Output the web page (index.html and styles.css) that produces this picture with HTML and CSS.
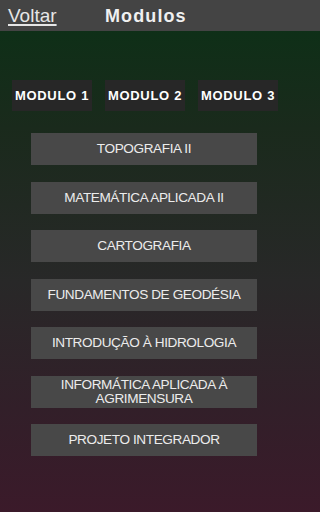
FILE: index.html
```html
<!DOCTYPE html>
<html lang="pt">
<head>
<meta charset="utf-8">
<title>Modulos</title>
<link rel="stylesheet" href="styles.css">
</head>
<body>
<div class="app">
  <header class="topbar">
    <a class="back" href="#">Voltar</a>
    <h1 class="title">Modulos</h1>
    <span></span>
  </header>
  <nav class="modules">
    <button class="mod">MODULO 1</button>
    <button class="mod">MODULO 2</button>
    <button class="mod">MODULO 3</button>
  </nav>
  <ul class="list">
    <li class="item">TOPOGRAFIA II</li>
    <li class="item">MATEMÁTICA APLICADA II</li>
    <li class="item">CARTOGRAFIA</li>
    <li class="item">FUNDAMENTOS DE GEODÉSIA</li>
    <li class="item">INTRODUÇÃO À HIDROLOGIA</li>
    <li class="item">INFORMÁTICA APLICADA À<br>AGRIMENSURA</li>
    <li class="item">PROJETO INTEGRADOR</li>
  </ul>
</div>
</body>
</html>
```
FILE: styles.css
```css
html, body {
  margin: 0;
  padding: 0;
  background: #3b1a2a;
}
body {
  height: 512px;
  overflow: hidden;
  font-family: "Liberation Sans", Arial, sans-serif;
  color: #ececec;
}
.app {
  height: 512px;
  display: flex;
  flex-direction: column;
  background: linear-gradient(to bottom, #0b3116 0%, #1a2a1c 25%, #282828 55%, #321f29 80%, #3b1a2a 100%);
}
.topbar {
  height: 31px;
  flex: none;
  background: #444444;
  display: grid;
  grid-template-columns: 88px auto 1fr;
  align-items: center;
  padding: 0 8px;
}
.back {
  font-size: 19px;
  color: #e6e6e6;
  text-decoration: underline;
  text-underline-offset: 2px;
  text-decoration-thickness: 1.5px;
  justify-self: start;
  line-height: 1;
}
.title {
  margin: 0;
  font-size: 18px;
  font-weight: bold;
  letter-spacing: 1.1px;
  color: #f0f0f0;
  line-height: 1;
  padding-left: 9px;
}
.modules {
  margin-top: 49px;
  display: flex;
  gap: 13px;
  padding-left: 12px;
}
.mod {
  width: 80px;
  height: 31px;
  border: none;
  background: #272727;
  color: #ffffff;
  font-family: "Liberation Sans", Arial, sans-serif;
  font-weight: bold;
  font-size: 13px;
  letter-spacing: 0.7px;
  padding: 0;
}
.list {
  list-style: none;
  margin: 22px 0 0 31px;
  padding: 0;
  display: flex;
  flex-direction: column;
  gap: 16.5px;
}
.item {
  width: 226px;
  height: 32px;
  background: #484848;
  display: flex;
  align-items: center;
  justify-content: center;
  text-align: center;
  font-size: 13.6px;
  line-height: 14px;
  letter-spacing: -0.4px;
  color: #ececec;
}
```
